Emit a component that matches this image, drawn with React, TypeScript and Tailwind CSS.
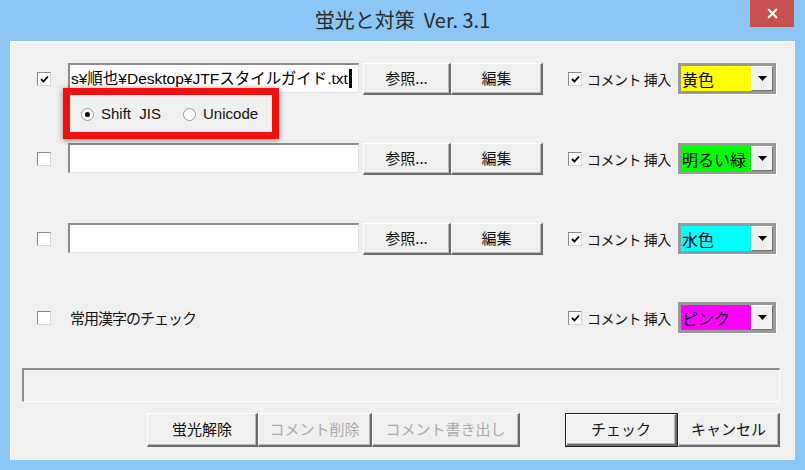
import { X } from "lucide-react";

const jp = { fontFamily: '"Noto Sans CJK JP", "Liberation Sans", sans-serif' };
const latin = { fontFamily: '"Liberation Sans", "Noto Sans CJK JP", sans-serif' };

function CheckBox({ checked }: { checked?: boolean }) {
  return (
    <div className="w-[14px] h-[14px] shrink-0 bg-white border border-t-[#8a8a8a] border-l-[#8a8a8a] border-b-[#d8d8d8] border-r-[#d8d8d8] flex items-center justify-center">
      {checked && (
        <svg width="9" height="8" viewBox="0 0 9 8">
          <path d="M1 4 L3.5 6.5 L8 1.5" stroke="#000" strokeWidth="1.8" fill="none" />
        </svg>
      )}
    </div>
  );
}

function Radio({ checked }: { checked?: boolean }) {
  return (
    <div className="w-[13px] h-[13px] rounded-full bg-white border border-[#9a9a9a] flex items-center justify-center">
      {checked && <div className="w-[5px] h-[5px] rounded-full bg-black" />}
    </div>
  );
}

function Btn({
  children,
  w,
  disabled,
  def,
}: {
  children: React.ReactNode;
  w: string;
  disabled?: boolean;
  def?: boolean;
}) {
  return (
    <div className={`${w} h-[34px] shrink-0 ${def ? "border border-[#222]" : ""}`}>
      <div
        className={`h-full flex items-center justify-center bg-[#f0f0f0] border-t border-l border-white border-b-2 border-r-2 border-b-[#6a6a6a] border-r-[#6a6a6a] shadow-[inset_-1px_-1px_0_#b8b8b8] text-[15px] ${
          disabled ? "text-[#ababab]" : "text-[#111]"
        }`}
        style={jp}
      >
        {children}
      </div>
    </div>
  );
}

function SmallBtn({ children, w }: { children: React.ReactNode; w: string }) {
  return (
    <div
      className={`${w} h-[32px] shrink-0 flex items-center justify-center bg-[#f0f0f0] border-t border-l border-white border-b-2 border-r-2 border-b-[#6a6a6a] border-r-[#6a6a6a] shadow-[inset_-1px_-1px_0_#b8b8b8] text-[15px] text-[#111]`}
      style={jp}
    >
      {children}
    </div>
  );
}

function Combo({ label, color }: { label: string; color: string }) {
  return (
    <div className="w-[99px] h-[32px] shrink-0 border-b border-r border-white">
      <div className="h-full flex border-[3px] border-[#999]">
        <div
          className={`flex-1 ${color} text-[16px] leading-none text-black flex items-center pl-[1px] whitespace-nowrap overflow-hidden`}
          style={jp}
        >
          {label}
        </div>
        <div className="w-[22px] bg-[#f0f0f0] border-l border-t border-white border-r border-b border-r-[#707070] border-b-[#707070] flex items-center justify-center">
          <svg width="9" height="5" viewBox="0 0 9 5">
            <path d="M0 0 H9 L4.5 5 Z" fill="#000" />
          </svg>
        </div>
      </div>
    </div>
  );
}

function CommentPart({ label, color }: { label: string; color: string }) {
  return (
    <div className="ml-auto flex items-center">
      <CheckBox checked />
      <div className="ml-[5px] w-[91px] text-[14px] tracking-[-0.5px] text-[#111]" style={jp}>
        コメント 挿入
      </div>
      <Combo label={label} color={color} />
    </div>
  );
}

function FileRow({
  checked,
  path,
  label,
  color,
}: {
  checked?: boolean;
  path?: string;
  label: string;
  color: string;
}) {
  return (
    <div className="h-[32px] flex items-center pl-[26px] pr-[18px]">
      <CheckBox checked={checked} />
      <div className="ml-[17px] w-[291px] h-[30px] self-start bg-white border-t-2 border-l-2 border-t-[#8c8c8c] border-l-[#8c8c8c] border-b border-r border-b-[#e2e2e2] border-r-[#e2e2e2] flex items-center overflow-hidden pl-[1px]">
        {path && (
          <span className="whitespace-nowrap text-[15.5px] text-black flex items-center" style={latin}>
            {path}
            <span className="inline-block w-[3px] h-[19px] bg-black ml-[1px]" />
          </span>
        )}
      </div>
      <div className="ml-[4px] flex">
        <SmallBtn w="w-[88px]">参照...</SmallBtn>
        <SmallBtn w="w-[92px]">編集</SmallBtn>
      </div>
      <CommentPart label={label} color={color} />
    </div>
  );
}

export default function App() {
  return (
    <div className="w-[805px] h-[470px] bg-[#8cc6f5] flex flex-col overflow-hidden">
      <div className="h-[41px] grid grid-cols-[1fr_auto_1fr]">
        <div />
        <div className="flex items-center pb-[2px] text-[20px] text-[#2b2b2b]" style={jp}>
          蛍光と対策&nbsp;&nbsp;Ver. 3.1
        </div>
        <div className="flex justify-end pr-[11px]">
          <div className="w-[44px] h-[27px] bg-[#c75050] flex items-center justify-center">
            <X size={15} strokeWidth={3.5} color="#ffffff" />
          </div>
        </div>
      </div>

      <div className="relative mx-[10px] h-[419px] bg-[#f0f0f0] border-t border-l border-[#fafafa] pt-[21px] flex flex-col">
        <FileRow checked path="s¥順也¥Desktop¥JTFスタイルガイド.txt" label="黄色" color="bg-[#ffff00]" />

        <div className="h-[38px] flex items-center pl-[70px] text-[15px] text-[#111]" style={latin}>
          <Radio checked />
          <span className="ml-[7px]">Shift&nbsp;&nbsp;JIS</span>
          <div className="ml-[22px]">
            <Radio />
          </div>
          <span className="ml-[7px]">Unicode</span>
        </div>

        <div className="mt-[10px]">
          <FileRow label="明るい緑" color="bg-[#00ff00]" />
        </div>
        <div className="mt-[48px]">
          <FileRow label="水色" color="bg-[#00ffff]" />
        </div>

        <div className="mt-[47px] h-[32px] flex items-center pl-[26px] pr-[18px]">
          <CheckBox />
          <div className="ml-[19px] text-[15px] tracking-[-1px] text-[#111]" style={jp}>
            常用漢字のチェック
          </div>
          <CommentPart label="ピンク" color="bg-[#ff00ff]" />
        </div>

        <div className="mt-[34px] ml-[11px] mr-[15px] h-[34px] bg-[#f0f0f0] border-t-2 border-l-2 border-t-[#8c8c8c] border-l-[#8c8c8c] border-b border-r border-b-white border-r-white" />

        <div className="mt-[11px] flex pl-[136px]">
          <Btn w="w-[111px]">蛍光解除</Btn>
          <Btn w="w-[114px]" disabled>
            コメント削除
          </Btn>
          <Btn w="w-[148px]" disabled>
            コメント書き出し
          </Btn>
          <div className="ml-[45px]">
            <Btn w="w-[113px]" def>
              チェック
            </Btn>
          </div>
          <Btn w="w-[102px]">キャンセル</Btn>
        </div>

        <div className="absolute left-[52px] top-[46px] w-[216px] h-[51px] border-[7px] border-[#f01010] shadow-[0_1px_6px_rgba(0,0,0,0.45)]" />
      </div>
    </div>
  );
}
